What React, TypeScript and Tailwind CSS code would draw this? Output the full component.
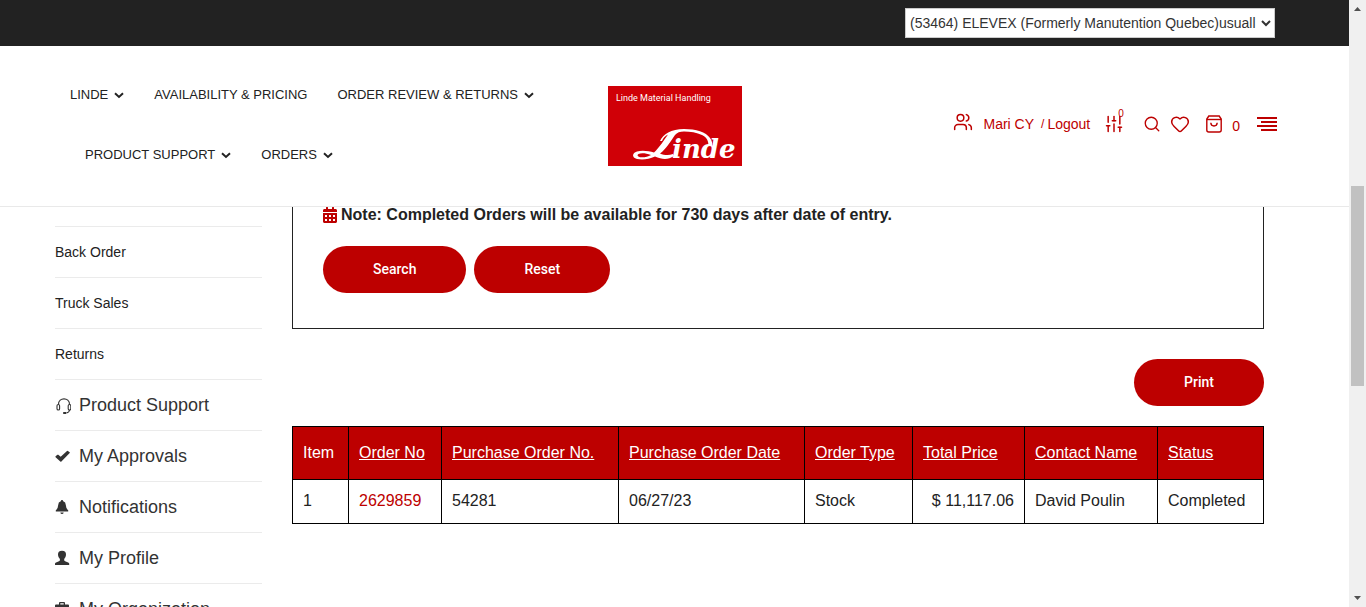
import React from "react";
import { Users, SlidersVertical, Search, Heart } from "lucide-react";
import { FaCalendarAlt } from "react-icons/fa";

function Chevron() {
  return (
    <svg viewBox="0 0 10 7" className="mt-px h-[7px] w-[10px]" aria-hidden="true">
      <path d="M1 1.2 L5 4.9 L9 1.2" fill="none" stroke="currentColor" strokeWidth="2" />
    </svg>
  );
}

function HeadsetIcon() {
  return (
    <svg viewBox="0 0 16 16" className="mt-[2px] h-4 w-4" fill="none" stroke="currentColor" strokeWidth="1.1" aria-hidden="true">
      <path d="M3.500 6.500C3.500 -1 14.500 -1 14.500 6.500" />
      <rect x="2" y="6.500" width="2.600" height="5.500" rx="1.300" />
      <rect x="13.200" y="6.500" width="2.600" height="5.500" rx="1.300" />
      <path d="M14.500 12Q14.200 14.600 11.500 14.900" />
      <path d="M8.200 15H11.200" strokeWidth="2" />
    </svg>
  );
}

function CheckIcon() {
  return (
    <svg viewBox="0 0 16 16" className="h-4 w-4 fill-current" aria-hidden="true">
      <path d="M.6 8.300 2.400 6.800Q2.900 6.500 3.300 6.800L5.700 8.700 12 2.900Q12.500 2.500 12.900 2.900L14.700 4.300Q15 4.700 14.700 5.100L6.400 13.600Q5.800 14.100 5.300 13.600L.6 9.200Q.1 8.700.6 8.300Z" />
    </svg>
  );
}

function BellIcon() {
  return (
    <svg viewBox="0 0 16 16" className="h-4 w-4 fill-current" aria-hidden="true">
      <path d="M7 1Q8.200 1 8.200 2.200Q10.800 3 10.800 6Q10.900 9.300 13.200 11.300V12.400H.8V11.300Q3.100 9.300 3.200 6Q3.200 3 5.800 2.200Q5.800 1 7 1ZM5.300 13.400H8.700Q8.400 15 7 15Q5.600 15 5.300 13.400Z" />
    </svg>
  );
}

function UserIcon() {
  return (
    <svg viewBox="0 0 16 16" className="h-4 w-4 fill-current" aria-hidden="true">
      <path d="M7 .8Q11.200 .8 11 5Q10.800 7.500 9.200 9V10.400Q9.700 11.100 12 11.900Q14.200 12.700 14.200 13.600V14.900H0V13.600Q0 12.700 2.200 11.900Q4.400 11.100 4.900 10.400V9Q3.200 7.500 3 5Q2.800 .8 7 .8Z" />
    </svg>
  );
}

function BriefcaseIcon() {
  return (
    <svg viewBox="0 0 16 16" className="h-4 w-4 fill-current" aria-hidden="true">
      <path d="M4 3.500V2Q4 1 5 1H9Q10 1 10 2V3.500H13Q14 3.500 14 4.500V8.500H0V4.500Q0 3.500 1 3.500ZM5.300 3.500H8.700V2.300H5.300ZM0 9.500H6V10.500H8V9.500H14V13Q14 14 13 14H1Q0 14 0 13Z" />
    </svg>
  );
}

function BagIcon() {
  return (
    <svg viewBox="0 0 18 18" className="h-[18px] w-[18px]" fill="none" stroke="currentColor" strokeWidth="1.4" aria-hidden="true">
      <path d="M3.800 1H14.200L16.200 4V15Q16.200 17 14.200 17H3.800Q1.800 17 1.800 15V4Z" />
      <path d="M1.800 4.500H16.200" />
      <path d="M5.800 7.800Q6 11 9 11Q12 11 12.200 7.800" />
    </svg>
  );
}

function MenuIcon() {
  return (
    <svg viewBox="0 0 20 14" className="h-[14px] w-5 fill-current" aria-hidden="true">
      <path d="M0 0H20V2H0ZM4 4H20V6H4ZM0 8H20V10H0ZM4 12H20V14H4Z" />
    </svg>
  );
}

function Logo() {
  return (
    <svg viewBox="0 0 134 80" className="h-20 w-[134px]" role="img" aria-label="Linde Material Handling">
      <rect width="134" height="80" fill="#d00007" />
      <text x="8" y="15" fill="#fff" fontSize="9" fontFamily="Roboto, sans-serif">
        Linde Material Handling
      </text>
      <path
        fill="#fff"
        d="M52 55C55 48 63 43 76 43C88 43 98 46 102 52C104 55 104.500 57 104 60L100.500 60C100.500 55 99 51.500 94 49C89 46.500 82 45.500 76 45.500C72 45.500 69 46.500 67 49C63 55 58 63 52 67.500C56 69 60 70 65 68L66 70C60 74 54 73.500 47 70.500C41 73.500 34 74 29 73C23.500 71.500 24 67 29 65.500C34 64 41 65 46 66.500C51 62 56 54 60 48.500C57 50 55 52 54 55ZM43 69C38 67 33 66.500 30.500 68C28.500 69.500 30 71 33 71.300C37 71.500 40 70.500 43 69Z"
      />
      <text x="64" y="72" fill="#fff" fontSize="26" fontWeight="bold" fontStyle="italic" fontFamily="'DejaVu Serif', serif">
        inde
      </text>
    </svg>
  );
}

const navItems = [
  { label: "LINDE", menu: true },
  { label: "AVAILABILITY & PRICING", menu: false },
  { label: "ORDER REVIEW & RETURNS", menu: true },
  { label: "PRODUCT SUPPORT", menu: true },
  { label: "ORDERS", menu: true },
];

const subLinks = ["Back Order", "Truck Sales", "Returns"];

const sections = [
  { label: "Product Support", icon: <HeadsetIcon /> },
  { label: "My Approvals", icon: <CheckIcon /> },
  { label: "Notifications", icon: <BellIcon /> },
  { label: "My Profile", icon: <UserIcon /> },
  { label: "My Organization", icon: <BriefcaseIcon /> },
];

const columns = ["Order No", "Purchase Order No.", "Purchase Order Date", "Order Type", "Total Price", "Contact Name", "Status"];

function PillButton({ children }: { children: React.ReactNode }) {
  return (
    <button
      type="button"
      className="h-[47px] rounded-full bg-[#bd0000] px-[50px] pb-[2px] font-['Roboto',sans-serif] text-sm font-medium text-white"
    >
      {children}
    </button>
  );
}

function Header() {
  return (
    <header className="shrink-0">
      <div className="flex h-[46px] items-start justify-end bg-[#222] pt-2 pr-[74px]">
        <select aria-label="Account" className="h-[30px] w-[370px] border border-[#ccc] bg-white text-sm text-[#333]">
          <option>(53464) ELEVEX (Formerly Manutention Quebec)usuall</option>
        </select>
      </div>
      <div className="grid grid-cols-[1fr_auto_1fr] items-center border-b border-[#e9e9e9] pt-[19px] pr-[72px] pb-[21px] pl-[70px]">
        <nav>
          <ul className="flex flex-wrap text-[13px]">
            {navItems.map((item) => (
              <li key={item.label} className="px-[15px] first:pl-0">
                <a href="#" className="flex h-[60px] items-center gap-[6px] whitespace-nowrap">
                  {item.label}
                  {item.menu && <Chevron />}
                </a>
              </li>
            ))}
          </ul>
        </nav>
        <a href="#" className="mt-[2px] ml-[2px]">
          <Logo />
        </a>
        <div className="flex items-center justify-end pb-[2px] text-sm text-[#bd0000]">
          <Users className="mr-[10px] mb-1 h-[20px] w-[20px]" strokeWidth={1.8} />
          <a href="#" className="whitespace-nowrap">Mari CY</a>
          <span className="ml-[7px] text-xs">/</span>
          <a href="#" className="ml-[3px]">Logout</a>
          <button type="button" aria-label="Compare" className="relative ml-[14px]">
            <SlidersVertical className="h-5 w-5" strokeWidth={1.8} />
            <span className="absolute -top-[6px] left-[14px] text-[10px] leading-3">0</span>
          </button>
          <button type="button" aria-label="Search" className="ml-[19px]">
            <Search className="h-[18px] w-[18px]" strokeWidth={1.8} />
          </button>
          <button type="button" aria-label="Wishlist" className="ml-[9px]">
            <Heart className="h-5 w-5" strokeWidth={1.8} />
          </button>
          <button type="button" aria-label="Cart" className="ml-[15px] flex items-center gap-[9px]">
            <BagIcon />
            <span className="mt-1">0</span>
          </button>
          <button type="button" aria-label="Menu" className="ml-[17px]">
            <MenuIcon />
          </button>
        </div>
      </div>
    </header>
  );
}

function Sidebar() {
  return (
    <aside className="w-[207px] shrink-0 pt-[19px]">
      <ul>
        {subLinks.map((label) => (
          <li key={label} className="border-t border-[#ebebeb]">
            <a href="#" className="flex h-[50px] items-center text-sm">{label}</a>
          </li>
        ))}
        {sections.map((s) => (
          <li key={s.label} className="border-t border-[#ebebeb]">
            <a href="#" className="flex h-[50px] items-center gap-2 text-lg text-[#333]">
              {s.icon}
              {s.label}
            </a>
          </li>
        ))}
      </ul>
    </aside>
  );
}

function Orders() {
  return (
    <main className="min-w-0 flex-1">
      <section className="border-x border-b border-[#222] px-[30px] pb-[35px]">
        <p className="flex h-[39px] items-start gap-1 text-base leading-4 font-bold">
          <FaCalendarAlt className="h-4 w-[14px] text-[#bd0000]" />
          Note: Completed Orders will be available for 730 days after date of entry.
        </p>
        <div className="flex gap-2">
          <PillButton>Search</PillButton>
          <PillButton>Reset</PillButton>
        </div>
      </section>
      <div className="flex justify-end pt-[30px] pb-5">
        <PillButton>Print</PillButton>
      </div>
      <table className="w-full table-fixed border-collapse text-left text-base [&_td]:border [&_td]:border-black [&_td]:px-[10px] [&_td]:pb-[2px] [&_th]:border [&_th]:border-black [&_th]:px-[10px] [&_th]:font-normal">
        <colgroup>
          <col className="w-[56px]" />
          <col className="w-[93px]" />
          <col className="w-[177px]" />
          <col className="w-[186px]" />
          <col className="w-[108px]" />
          <col className="w-[112px]" />
          <col className="w-[133px]" />
          <col className="w-[106px]" />
        </colgroup>
        <thead>
          <tr className="h-[53px] bg-[#bd0000] text-white">
            <th>Item</th>
            {columns.map((c) => (
              <th key={c} className="whitespace-nowrap">
                <a href="#" className="underline">{c}</a>
              </th>
            ))}
          </tr>
        </thead>
        <tbody>
          <tr className="h-11">
            <td>1</td>
            <td><a href="#" className="text-[#bd0000]">2629859</a></td>
            <td>54281</td>
            <td>06/27/23</td>
            <td>Stock</td>
            <td className="text-right">$ 11,117.06</td>
            <td>David Poulin</td>
            <td>Completed</td>
          </tr>
        </tbody>
      </table>
    </main>
  );
}

function ScrollRail() {
  return (
    <div className="flex w-[17px] shrink-0 flex-col items-center bg-[#f0f0f0] text-[#505050]" aria-hidden="true">
      <svg viewBox="0 0 17 17" className="h-[17px] w-[17px] fill-current">
        <path d="M5 11 8.500 7 12 11Z" />
      </svg>
      <div className="flex-[169]" />
      <div className="w-[13px] flex-[200] bg-[#c1c1c1]" />
      <div className="flex-[204]" />
      <svg viewBox="0 0 17 17" className="h-[17px] w-[17px] fill-current">
        <path d="M5 6 8.500 10 12 6Z" />
      </svg>
    </div>
  );
}

export default function App() {
  return (
    <div className="flex h-screen bg-white font-['Liberation_Sans',Arial,sans-serif] text-[#222]">
      <div className="flex min-w-0 flex-1 flex-col overflow-hidden">
        <Header />
        <div className="flex min-h-0 flex-1 gap-[30px] overflow-hidden pr-[85px] pl-[55px]">
          <Sidebar />
          <Orders />
        </div>
      </div>
      <ScrollRail />
    </div>
  );
}
